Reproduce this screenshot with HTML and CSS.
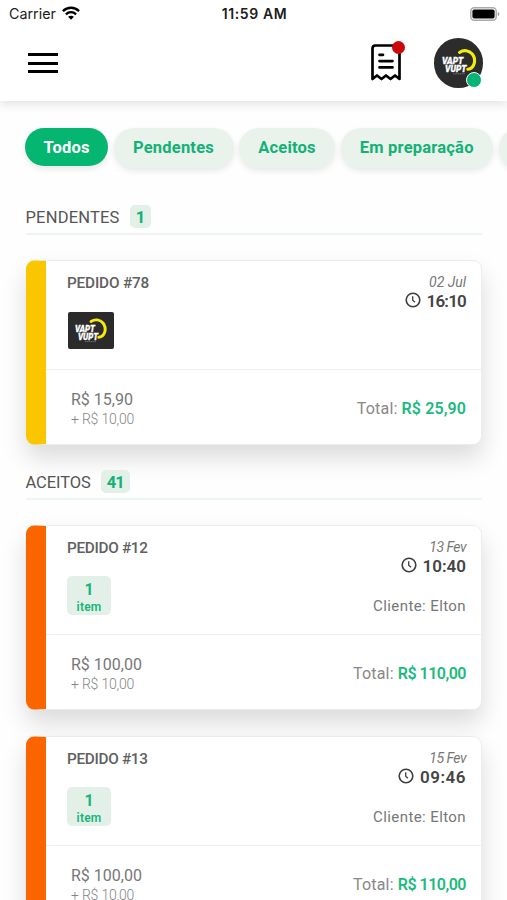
FILE: index.html
```html
<!DOCTYPE html>
<html lang="pt-BR">
<head>
<meta charset="utf-8">
<meta name="viewport" content="width=device-width, initial-scale=1">
<title>Pedidos</title>
<link rel="stylesheet" href="styles.css">
</head>
<body>
<svg width="0" height="0" class="defs">
  <symbol id="brand" viewBox="0 0 46 37">
    <path d="M23 9.500C27 6.800 32 7.500 35 11C39.200 16.500 37 24.500 30.800 25.300" fill="none" stroke="#f5ec0a" stroke-width="2.900" stroke-linecap="round"/>
    <path d="M17 29.600h11" stroke="#8b8b8b" stroke-width=".7" stroke-dasharray="1.500 .5"/>
  </symbol>
  <symbol id="clock" viewBox="0 0 16 16">
    <circle cx="8" cy="8" r="6.800" fill="none" stroke="#3d3d3d" stroke-width="1.600"/>
    <path d="M7.700 4.300v3.900l2.300 2" fill="none" stroke="#3d3d3d" stroke-width="1.300"/>
  </symbol>
</svg>

<header class="header">
  <div class="status">
    <div class="carrier"><span>Carrier</span>
      <svg width="18" height="14" viewBox="0 0 18 14" fill="none" stroke="#000" stroke-width="2.300">
        <path d="M.9 5.100C5.500.6 12.500.6 17.100 5.100"/>
        <path d="M3.900 8.300C6.800 5.500 11.200 5.500 14.100 8.300"/>
        <path d="M9 13.800L6.100 10.800C7.600 9.300 10.400 9.300 11.900 10.800Z" fill="#000" stroke="none"/>
      </svg>
    </div>
    <div class="time">11:59 AM</div>
    <svg class="battery" width="30" height="14" viewBox="0 0 30 14">
      <rect x=".8" y=".8" width="25.400" height="12.400" rx="3.500" fill="#fff" stroke="#aaa" stroke-width="1.500"/>
      <rect x="2.400" y="2.400" width="22.200" height="9.200" rx="1.800"/>
      <path d="M27.800 5v4.200q1.600-.6 1.600-2.100T27.800 5" fill="#999"/>
    </svg>
  </div>
  <div class="toolbar">
    <div class="menu"><i></i><i></i><i></i></div>
    <div class="actions">
      <div class="receipt">
        <svg width="30" height="37" viewBox="0 0 30 37" fill="none" stroke="#000" stroke-width="2.700" stroke-linejoin="round" stroke-linecap="round">
          <path d="M1.500 35V4.500Q1.500 1.500 4.500 1.500H25.500Q28.500 1.500 28.500 4.500V35L24 31.500 19.500 35 15 31.500 10.500 35 6 31.500Z"/>
          <path d="M8.500 10.800h3.500M8.500 17.100h13M8.500 23.400h13"/>
        </svg>
        <span class="alert"></span>
      </div>
      <div class="avatar">
        <svg class="avatar-logo" viewBox="0 0 46 37"><use href="#brand"/>
          <g class="brand-text"><text x="6.500" y="20" textLength="20" lengthAdjust="spacingAndGlyphs">VAPT</text>
          <text x="9.500" y="27.700" textLength="20" lengthAdjust="spacingAndGlyphs">VUPT</text></g></svg>
        <span class="online"></span>
      </div>
    </div>
  </div>
</header>

<nav class="tabs">
  <a class="tab active t1">Todos</a>
  <a class="tab t2">Pendentes</a>
  <a class="tab t3">Aceitos</a>
  <a class="tab t4">Em preparação</a>
  <a class="tab t5"></a>
</nav>

<main class="content">
  <section>
    <h2 class="heading"><span>PENDENTES</span><b class="count">1</b></h2>
    <article class="card pending">
      <div class="top">
        <div class="info"><div class="order">PEDIDO #78</div>
          <svg class="thumb" width="46" height="37" viewBox="0 0 46 37"><use href="#brand"/>
            <g class="brand-text"><text x="7" y="20" textLength="20" lengthAdjust="spacingAndGlyphs">VAPT</text>
            <text x="10" y="27.700" textLength="20" lengthAdjust="spacingAndGlyphs">VUPT</text></g></svg></div>
        <div class="meta"><div class="date wide">02 Jul</div>
          <div class="hour narrow"><svg width="16" height="16"><use href="#clock"/></svg><b>16:10</b></div></div>
      </div>
      <div class="bottom">
        <div><div class="price">R$ 15,90</div><div class="fee">+ R$ 10,00</div></div>
        <div class="total wide"><span>Total:</span> <b>R$ 25,90</b></div>
      </div>
    </article>
  </section>
  <section>
    <h2 class="heading accepted"><span>ACEITOS</span><b class="count">41</b></h2>
    <article class="card">
      <div class="top">
        <div class="info"><div class="order">PEDIDO #12</div>
          <div class="items"><b>1</b><span>item</span></div></div>
        <div class="meta"><div class="date">13 Fev</div>
          <div class="hour"><svg width="16" height="16"><use href="#clock"/></svg><b>10:40</b></div>
          <div class="client">Cliente: Elton</div></div>
      </div>
      <div class="bottom">
        <div><div class="price">R$ 100,00</div><div class="fee">+ R$ 10,00</div></div>
        <div class="total"><span>Total:</span> <b>R$ 110,00</b></div>
      </div>
    </article>
    <article class="card">
      <div class="top">
        <div class="info"><div class="order">PEDIDO #13</div>
          <div class="items"><b>1</b><span>item</span></div></div>
        <div class="meta"><div class="date">15 Fev</div>
          <div class="hour wide"><svg width="16" height="16"><use href="#clock"/></svg><b>09:46</b></div>
          <div class="client">Cliente: Elton</div></div>
      </div>
      <div class="bottom">
        <div><div class="price">R$ 100,00</div><div class="fee">+ R$ 10,00</div></div>
        <div class="total"><span>Total:</span> <b>R$ 110,00</b></div>
      </div>
    </article>
  </section>
</main>
</body>
</html>
```
FILE: styles.css
```css
* { box-sizing: border-box; }
html, body { margin: 0; height: 900px; overflow: hidden; }
body { background: #fefefe; font-family: Roboto, "Liberation Sans", sans-serif; color: #555; }
svg { display: block; flex: none; }
.defs { position: absolute; }
.header { height: 101px; background: #fff; box-shadow: 0 4px 9px rgba(0,0,0,.1); }
.status { display: grid; grid-template-columns: 1fr auto 1fr; align-items: center; height: 27px; padding: 0 7px 0 9px; font-family: Inter, sans-serif; color: #1c1c1c; }
.carrier { display: flex; align-items: center; gap: 6px; font-size: 14.3px; }
.carrier svg { margin-bottom: 2px; }
.time { font-size: 14px; font-weight: 600; letter-spacing: .6px; }
.battery { justify-self: end; }
.toolbar { display: flex; justify-content: space-between; align-items: center; height: 73px; padding: 0 24px 0 28px; }
.menu { display: flex; flex-direction: column; gap: 5.500px; width: 29.500px; margin-top: -1px; }
.menu i { height: 3px; background: #000; }
.actions { display: flex; align-items: center; gap: 32.500px; margin-top: -1px; }
.receipt { position: relative; width: 30px; height: 37px; margin-top: -1px; }
.alert { position: absolute; right: -3.500px; top: -3px; width: 13px; height: 13px; border-radius: 50%; background: #cc080b; }
.avatar { position: relative; width: 49.500px; height: 49.500px; border-radius: 50%; background: #2c2c2c; }
.avatar-logo { width: 49px; height: 40px; margin: 4px 0 0 1px; }
.online { position: absolute; right: 1px; bottom: 0; width: 16px; height: 16px; border: 1.500px solid #fff; border-radius: 50%; background: #04b575; }
.brand-text { font: italic 900 9px Roboto, sans-serif; fill: #fff; stroke: #fff; stroke-width: .3px; }
.tabs { display: flex; gap: 5.500px; padding: 27px 0 0 25px; height: 104px; overflow: hidden; }
.tab { flex: none; height: 40px; line-height: 40px; border-radius: 20px; text-align: center; font-size: 16.500px; font-weight: 700; letter-spacing: .2px; color: #12b176; background: #e9f3ec; box-shadow: 0 3px 6px rgba(0,0,0,.09); }
.tab.active { height: 38px; background: #05b670; color: #fff; }
.t1 { width: 83px; }
.t2 { width: 120px; }
.t3 { width: 96px; }
.t4 { width: 152.500px; }
.t5 { width: 120px; }
.content { padding: 0 25px 0 26px; }
.heading { display: flex; align-items: flex-start; gap: 10px; height: 30px; margin: 0 0 25px; border-bottom: 2px solid #edf4f1; font-size: 16.500px; line-height: 25px; font-weight: 400; color: #555; letter-spacing: .2px; }
.accepted { letter-spacing: -.1px; }
.heading > span { margin-left: -.500px; }
.count { height: 23px; line-height: 25px; min-width: 21px; padding: 0 6px; border-radius: 5px; background: #e2f0e7; color: #12b176; text-align: center; font-weight: 700; }
.accepted .count { letter-spacing: -.8px; }
.card { height: 185px; margin-bottom: 26px; background: #fff; border: 1px solid #e7efec; border-left: 20px solid #fa6500; border-radius: 9px; box-shadow: 0 13px 24px rgba(0,0,0,.14); }
.pending { border-left-color: #fac600; margin-bottom: 25px; }
.top { display: flex; justify-content: space-between; height: 109px; padding: 12px 15px 0 21px; border-bottom: 1px solid #e9f0ee; }
.order { font-size: 15.300px; line-height: 20px; font-weight: 500; letter-spacing: -.3px; color: #606060; }
.pending .order { letter-spacing: -.15px; }
.thumb { margin: 19px 0 0 1px; border-radius: 2px; background: #2b2b2b; }
.items { display: flex; flex-direction: column; align-items: center; width: 44px; height: 39px; margin-top: 18px; padding-top: 4px; border-radius: 5px; background: #e2f0e7; color: #17b57b; }
.items b { font-size: 16px; line-height: 19px; }
.items span { font-size: 12px; line-height: 16px; font-weight: 600; letter-spacing: .2px; }
.meta { display: flex; flex-direction: column; align-items: flex-end; }
.date { font-size: 14px; line-height: 19px; font-style: italic; color: #777; letter-spacing: -.5px; }
.date.wide { letter-spacing: 0; }
.hour { display: flex; align-items: center; gap: 6px; height: 18px; font-size: 17px; color: #444; }
.hour svg { margin-bottom: 2px; }
.hour b { font-weight: 600; }
.hour.narrow b { letter-spacing: -.8px; }
.hour.wide b { letter-spacing: .5px; }
.client { margin: 21px 0 0; font-size: 15px; line-height: 20px; color: #777; letter-spacing: .4px; }
.bottom { display: flex; justify-content: space-between; height: 74px; padding: 19px 15px 0 25px; }
.price { font-size: 16px; line-height: 21px; color: #777; }
.fee { font-size: 14px; line-height: 18px; color: #858585; font-weight: 300; letter-spacing: -.2px; }
.total { padding-top: 9px; font-size: 16px; line-height: 22px; color: #888; }
.total span { letter-spacing: .2px; }
.total b { font-weight: 600; color: #1bbb7e; letter-spacing: -.5px; }
.total.wide b { letter-spacing: .1px; }
```
